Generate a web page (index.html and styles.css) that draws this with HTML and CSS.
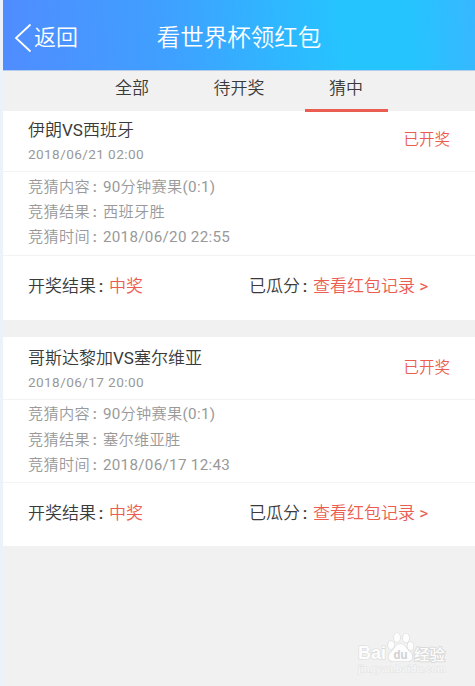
FILE: index.html
```
<!DOCTYPE html>
<html lang="zh-CN">
<head>
<meta charset="utf-8">
<title>看世界杯领红包</title>
<meta name="viewport" content="width=device-width,initial-scale=1">
<link rel="stylesheet" href="styles.css">
</head>

<body>
<div class="app">
	<header class="topbar">
		<a class="back">
			<svg width="18" height="30" viewBox="0 0 18 30"><path d="M16.5 1.5L2 15L16.5 28.5" fill="none" stroke="#fff" stroke-width="1.8"/></svg>
			<span>返回</span>
		</a>
		<h1>看世界杯领红包</h1>
	</header>

	<nav class="tabs">
		<a class="tab">全部</a>
		<a class="tab">待开奖</a>
		<a class="tab active">猜中</a>
	</nav>

	<section class="card">
		<div class="match">
			<div>
				<h2>伊朗VS西班牙</h2>
				<p class="date">2018/06/21 02:00</p>
			</div>
			<span class="state">已开奖</span>
		</div>
		<div class="detail">
			<p>竞猜内容<i class="colon">:</i>90分钟赛果(0:1)</p>
			<p>竞猜结果<i class="colon">:</i>西班牙胜</p>
			<p>竞猜时间<i class="colon">:</i>2018/06/20 22:55</p>
		</div>
		<div class="result">
			<p>开奖结果<i class="colon">:</i><span class="red">中奖</span></p>
			<p>已瓜分<i class="colon">:</i><a class="red">查看红包记录 &gt;</a></p>
		</div>
	</section>

	<section class="card second">
		<div class="match">
			<div>
				<h2>哥斯达黎加VS塞尔维亚</h2>
				<p class="date">2018/06/17 20:00</p>
			</div>
			<span class="state">已开奖</span>
		</div>
		<div class="detail">
			<p>竞猜内容<i class="colon">:</i>90分钟赛果(0:1)</p>
			<p>竞猜结果<i class="colon">:</i>塞尔维亚胜</p>
			<p>竞猜时间<i class="colon">:</i>2018/06/17 12:43</p>
		</div>
		<div class="result">
			<p>开奖结果<i class="colon">:</i><span class="red">中奖</span></p>
			<p>已瓜分<i class="colon">:</i><a class="red">查看红包记录 &gt;</a></p>
		</div>
	</section>

	<svg class="watermark" width="92" height="48" viewBox="0 0 92 48">
		<g class="mark">
			<text x="2" y="28" font-size="18" textLength="28" lengthAdjust="spacingAndGlyphs">Bai</text>
			<ellipse cx="35" cy="14" rx="3" ry="4"/>
			<ellipse cx="41" cy="6.500" rx="3" ry="4.500"/>
			<ellipse cx="50" cy="7" rx="3" ry="4.500"/>
			<ellipse cx="54.500" cy="15" rx="3" ry="4"/>
			<path d="M44.500 13C40 13 38.500 18 34.500 21.500C30.500 26 33 30.500 38 30.500C42 30 47 30 51 30.500C57 30.500 58 25 54.500 21.500C50.500 18 49 13 44.500 13Z"/>
			<text class="du" x="37.500" y="27.500" font-size="13" textLength="14" lengthAdjust="spacingAndGlyphs">du</text>
			<text class="cn" x="58" y="28.500" font-size="15" textLength="31" lengthAdjust="spacingAndGlyphs">经验</text>
			<text class="url" x="2" y="41" font-size="9.500" textLength="88" lengthAdjust="spacingAndGlyphs">jingyan.baidu.com</text>
		</g>
	</svg>
</div>
</body>
</html>
```

FILE: styles.css
```
body {
	margin: 0;
	background-color: #ebf2fa;
	font-family: Roboto, "Noto Sans CJK SC DemiLight", "Noto Sans CJK SC", sans-serif;
	font-weight: 400;
	color: #3a3a3a;
}
h1, h2, p {
	margin: 0;
	font-weight: 400;
}
.app {
	position: relative;
	box-sizing: border-box;
	min-height: 686px;
	margin-left: 3px;
	background-color: #f1f1f1;
}
.topbar {
	display: grid;
	grid-template-columns: 1fr auto 1fr;
	align-items: center;
	height: 71px;
	padding-top: 6px;
	box-sizing: border-box;
	border-bottom: 1px solid #b5cdea;
	background: linear-gradient(86deg, #508cff 0%, #3fa0ff 35%, #25c4ff 72%, #25c4ff 86%, #38b7ff 100%);
	color: #fff;
}
.topbar h1 {
	font-size: 23.5px;
	font-weight: 350;
	line-height: 34px;
}
.back {
	display: flex;
	align-items: center;
	gap: 2px;
	padding-left: 11px;
	font-size: 22px;
	font-weight: 350;
	line-height: 34px;
}
.tabs {
	display: flex;
	justify-content: center;
	gap: 24px;
	height: 40px;
}
.tab {
	position: relative;
	width: 83px;
	text-align: center;
	font-size: 17px;
	line-height: 35px;
}
.active::after {
	content: "";
	position: absolute;
	left: 0;
	right: 0;
	bottom: -1px;
	height: 3px;
	background-color: #ec5d51;
}
.card {
	box-sizing: border-box;
	height: 209px;
	margin-bottom: 17px;
	background-color: #fff;
}
.match {
	display: flex;
	justify-content: space-between;
	box-sizing: border-box;
	height: 61px;
	padding: 7px 25px 0;
	border-bottom: 1px solid #f3f3f3;
}
.match h2 {
	font-size: 17px;
	line-height: 24px;
}
.date {
	font-size: 13.6px;
	line-height: 24px;
	letter-spacing: 0.4px;
	color: #999;
}
.state {
	font-size: 15.5px;
	line-height: 45px;
	color: #ec5d51;
}
.detail {
	box-sizing: border-box;
	height: 84px;
	padding: 3px 25px;
	border-bottom: 1px solid #f3f3f3;
	font-size: 15.2px;
	line-height: 25px;
	letter-spacing: 0.3px;
	color: #999;
}
.colon {
	display: inline-block;
	width: 13px;
	padding-right: 3px;
	box-sizing: border-box;
	text-align: center;
	font-style: normal;
	font-weight: 500;
}
.result {
	display: grid;
	grid-template-columns: 221px 1fr;
	padding: 0 25px;
	font-size: 17px;
	line-height: 61px;
}
.second .match {
	height: 63px;
	padding-top: 9px;
}
.second .detail {
	height: 83px;
	padding-top: 2px;
	line-height: 25.5px;
}
.red {
	color: #ec5d51;
}
.watermark {
	position: absolute;
	left: 353px;
	top: 631px;
}
.mark {
	fill: #fdfdfd;
	stroke: #dadada;
	stroke-width: 1.2px;
	paint-order: stroke;
	font-family: "Liberation Sans", "Noto Sans CJK SC", sans-serif;
	font-weight: bold;
}
.mark .du {
	fill: #d0d0d0;
	stroke: none;
}
.mark .cn {
	font-weight: 500;
	stroke-width: 2px;
}
.mark .url {
	fill: #f6f6f6;
	stroke: #e4e4e4;
	stroke-width: 1px;
}
```
